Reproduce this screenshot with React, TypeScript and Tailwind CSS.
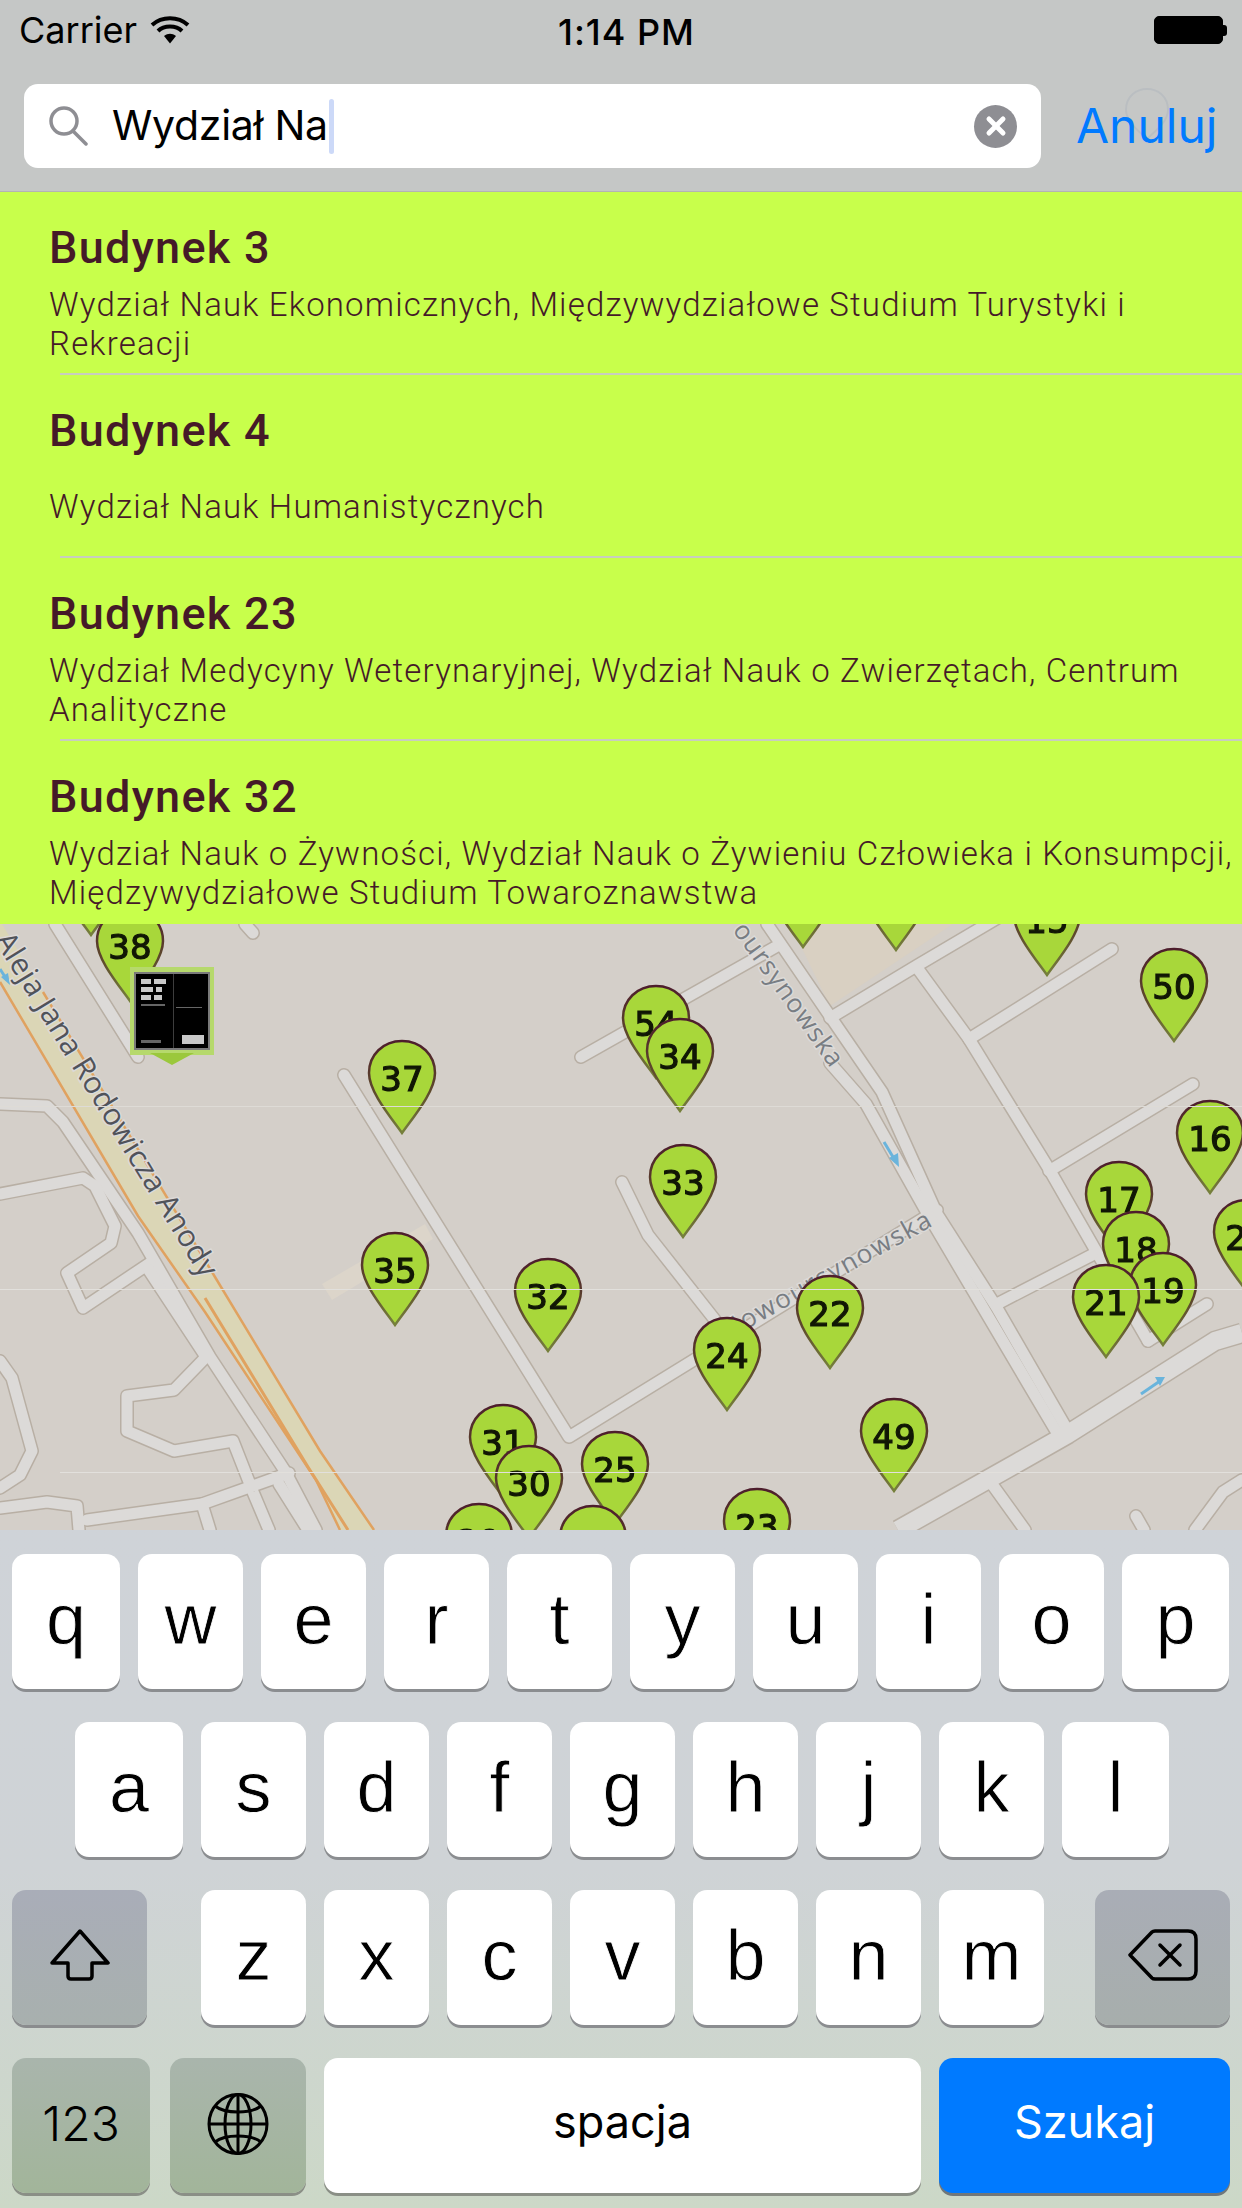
import React from "react";

const SF = "font-['Inter',_'Liberation_Sans',_sans-serif]";

const rows = [
  { title: "Budynek 3", desc: "Wydział Nauk Ekonomicznych, Międzywydziałowe Studium Turystyki i Rekreacji" },
  { title: "Budynek 4", desc: "Wydział Nauk Humanistycznych" },
  { title: "Budynek 23", desc: "Wydział Medycyny Weterynaryjnej, Wydział Nauk o Zwierzętach, Centrum Analityczne" },
  { title: "Budynek 32", desc: "Wydział Nauk o Żywności, Wydział Nauk o Żywieniu Człowieka i Konsumpcji, Międzywydziałowe Studium Towaroznawstwa" },
];

// x = pin centre, y = pin top, page coordinates
const pins: [string, number, number][] = [
  ["", 91, 841], ["", 803, 853], ["", 896, 856], ["15", 1047, 881],
  ["38", 130, 907], ["54", 656, 984], ["34", 680, 1017], ["50", 1174, 947],
  ["37", 402, 1039], ["33", 683, 1143], ["16", 1210, 1099], ["17", 1119, 1160],
  ["20", 1247, 1198], ["18", 1136, 1210], ["19", 1163, 1251], ["21", 1106, 1263],
  ["35", 395, 1231], ["32", 548, 1257], ["22", 830, 1274], ["24", 727, 1316],
  ["49", 894, 1397], ["31", 503, 1403], ["25", 615, 1430], ["30", 529, 1444],
  ["23", 757, 1487], ["29", 479, 1502], ["26", 593, 1504],
];

const roads: string[] = [
  "55,924 138,1057",
  "245,924 253,933",
  "0,1104 47,1106 63,1122 138,1233 210,1357 285,1471 316,1530",
  "0,1194 83,1178 95,1186 115,1226 111,1243 67,1273 83,1308 150,1263",
  "148,1269 206,1357 174,1390 127,1396 127,1431 174,1451 233,1441 253,1492 269,1530",
  "0,1508 47,1502 77,1506 79,1530",
  "87,1520 202,1504 289,1473",
  "202,1504 210,1530",
  "279,1484 308,1530",
  "0,1361 12,1378 32,1451 20,1475 0,1488",
  "344,1075 569,1437 937,1210",
  "581,1057 779,945",
  "767,924 834,1022 882,1092 937,1214 997,1308 1068,1431",
  "830,1063 866,1104 930,1218 1056,1431",
  "830,1018 918,965 1001,916",
  "918,969 969,1039 1049,1169 1096,1251 1148,1341",
  "969,1039 1112,949",
  "1049,1171 1193,1084",
  "997,1304 1092,1255",
  "1148,1341 1207,1304",
  "622,1182 648,1235 715,1320",
  "989,1480 1025,1530",
  "1136,1516 1144,1530",
  "1195,1530 1223,1492 1242,1480",
];

function MapDrawing() {
  return (
    <svg className="absolute inset-0 h-full w-full" viewBox="0 924 1242 606">
      <polygon points="790,924 830,1006 953,924" fill="#d9d0c2" />
      <polygon points="322,1284 425,1224 433,1239 332,1300" fill="#dcd5ca" />
      <polygon points="0,924 2,924 43,992 215,1277 320,1451 374,1530 340,1530 316,1480 205,1312 138,1216 0,982" fill="#dbd6b6" />
      <polyline points="43,992 215,1277 320,1451 374,1530" fill="none" stroke="#e0a260" strokeWidth="2.5" />
      <polyline points="0,982 138,1216 205,1312 316,1480 340,1530" fill="none" stroke="#e0a260" strokeWidth="2.5" />
      <polyline points="205,1298 308,1467 348,1530" fill="none" stroke="#e0a260" strokeWidth="3" />
      {roads.map((p) => (
        <polyline key={"c" + p} points={p} fill="none" stroke="#b8afa4" strokeWidth="14" strokeLinecap="round" strokeLinejoin="round" />
      ))}
      <polyline points="898,1530 1017,1463 1068,1434 1215,1341 1242,1333" fill="none" stroke="#b8afa4" strokeWidth="21" strokeLinejoin="round" />
      {roads.map((p) => (
        <polyline key={"f" + p} points={p} fill="none" stroke="#dcdad8" strokeWidth="11" strokeLinecap="round" strokeLinejoin="round" />
      ))}
      <polyline points="898,1530 1017,1463 1068,1434 1215,1341 1242,1333" fill="none" stroke="#dcdad8" strokeWidth="18" strokeLinejoin="round" />
      <g stroke="#6ab4dc" strokeWidth="3" fill="#6ab4dc">
        <line x1="884" y1="1142" x2="896" y2="1162" />
        <polygon points="899,1167 889,1158 898,1153" stroke="none" />
        <line x1="1141" y1="1394" x2="1160" y2="1381" />
        <polygon points="1165,1377 1155,1377 1160,1386" stroke="none" />
        <line x1="0" y1="969" x2="7" y2="980" />
        <polygon points="10,985 1,977 8,973" stroke="none" />
      </g>
      <g fontFamily="'Open Sans', sans-serif" style={{ paintOrder: "stroke" }} stroke="#dcdad8" strokeWidth="3">
        <text transform="translate(-6 940) rotate(58.5)" fontSize="30" fill="#50535a" textLength="398">Aleja Jana Rodowicza Anody</text>
        <text transform="translate(732 930) rotate(54.5)" fontSize="26" fill="#787d83" textLength="170">oursynowska</text>
        <text transform="translate(727 1340) rotate(-29)" fontSize="26" fill="#787d83" textLength="236">Nowoursynowska</text>
      </g>
    </svg>
  );
}

function Pin({ n, x, y }: { n: string; x: number; y: number }) {
  return (
    <div className="absolute h-[96px] w-[70px] blur-[0.6px]" style={{ left: x - 35, top: y - 924 }}>
      <svg className="absolute inset-0" width="70" height="96" viewBox="0 0 70 96">
        <defs>
          <linearGradient id="pinEdge" x1="0" y1="0" x2="0" y2="1">
            <stop offset="0" stopColor="#4d1d2c" />
            <stop offset="0.55" stopColor="#5e4a2c" />
            <stop offset="1" stopColor="#76803c" />
          </linearGradient>
        </defs>
        <path
          d="M35 2 C16 2 2 16 2 34 C2 52 22 76 35 94 C48 76 68 52 68 34 C68 16 54 2 35 2 Z"
          fill="#a8d73a"
          stroke="url(#pinEdge)"
          strokeWidth="2.5"
        />
      </svg>
      <div className="absolute left-0 right-0 top-[18px] text-center font-['DejaVu_Sans',_sans-serif] text-[34px] leading-[44px] text-[#111705] [-webkit-text-stroke:1.2px_#111705]">
        {n}
      </div>
    </div>
  );
}

function ImageMarker() {
  return (
    <div className="absolute left-[130px] top-[43px] h-[98px] w-[84px] blur-[0.7px]">
      <div className="absolute bottom-0 left-[20px] h-0 w-0 border-x-[22px] border-t-[12px] border-x-transparent border-t-[#9bc83c]" />
      <div className="h-[88px] w-[84px] bg-[#b6d96c] p-[4px] pt-[5px]">
        <div className="h-[78px] w-[76px] border-2 border-[#7a7a7a] bg-black">
          <svg width="72" height="74" viewBox="0 0 72 74" className="blur-[0.6px]">
            <g fill="#c9c9c9">
              <rect x="5" y="5" width="10" height="5" /><rect x="18" y="5" width="12" height="5" />
              <rect x="5" y="13" width="12" height="5" /><rect x="20" y="13" width="6" height="5" />
              <rect x="5" y="21" width="10" height="5" /><rect x="18" y="21" width="8" height="5" />
              <rect x="46" y="61" width="22" height="9" />
            </g>
            <g fill="#666">
              <rect x="5" y="30" width="24" height="2" /><rect x="40" y="33" width="26" height="1" />
              <rect x="37" y="0" width="1" height="74" opacity="0.6" /><rect x="5" y="66" width="20" height="3" />
            </g>
          </svg>
        </div>
      </div>
    </div>
  );
}

function Key({ label, className = "" }: { label: string; className?: string }) {
  return (
    <div className={`flex h-[135px] items-center justify-center rounded-[14px] bg-white pb-[6px] font-['Liberation_Sans',_sans-serif] text-[72px] font-normal leading-none text-black shadow-[0_3px_0_#8b8d90] [-webkit-text-stroke:0.8px_#fff] ${className}`}>
      {label}
    </div>
  );
}

function Wifi() {
  return (
    <svg width="40" height="28" viewBox="0 0 40 28" fill="none" stroke="#000" strokeWidth="4">
      <path d="M2 9 C12 0 28 0 38 9" />
      <path d="M8 15 C14 9 26 9 32 15" />
      <path d="M14 20 L20 27.5 L26 20 C22 17 18 17 14 20 Z" fill="#000" stroke="none" />
    </svg>
  );
}

function Battery() {
  return (
    <div className="flex items-center">
      <div className="h-[28px] w-[69px] rounded-[5px] border border-black bg-black" />
      <div className="h-[11px] w-[4px] rounded-r-[3px] bg-black" />
    </div>
  );
}

export default function App() {
  return (
    <div className={`flex h-[2208px] w-[1242px] flex-col overflow-hidden bg-white ${SF}`}>
      {/* Navigation header */}
      <header className="relative z-10 h-[192px] shrink-0 border-b border-[#b3b3b3] bg-[#c5c7c6]">
        <div className="relative flex h-[60px] items-center justify-between pl-[19px] pr-[15px]">
          <div className="flex items-center gap-[13px] text-[36px] leading-none text-black">
            <span>Carrier</span>
            <Wifi />
          </div>
          <div className="absolute left-[11px] right-0 top-[12px] text-center text-[36px] font-medium leading-[40px] tracking-[1px] text-black">1:14 PM</div>
          <Battery />
        </div>
        <div className="mt-[24px] flex items-center pl-[24px]">
          <div className="flex h-[84px] w-[1017px] items-center rounded-[14px] bg-white pl-[24px] pr-[24px]">
            <svg width="42" height="40" viewBox="0 0 42 40" fill="none" stroke="#8e8e93" strokeWidth="3.5">
              <circle cx="16" cy="15" r="13" />
              <line x1="25" y1="25" x2="38" y2="38" strokeLinecap="round" />
            </svg>
            <span className="ml-[22px] -translate-y-[1px] text-[41px] leading-none tracking-[-0.3px] text-black">Wydział Na</span>
            <span className="ml-[1px] h-[55px] w-[5px] rounded-sm bg-[#ccd9f8]" />
            <div className="ml-auto flex h-[43px] w-[43px] items-center justify-center rounded-full bg-[#8e8e93]">
              <svg width="22" height="22" viewBox="0 0 22 22" stroke="#fff" strokeWidth="5" strokeLinecap="round">
                <line x1="4" y1="4" x2="18" y2="18" />
                <line x1="18" y1="4" x2="4" y2="18" />
              </svg>
            </div>
          </div>
          <div className="relative ml-[35px] text-[48px] leading-none text-[#007aff]">
            <svg className="absolute left-[46px] top-[-16px]" width="50" height="54" viewBox="0 0 50 54" fill="none" stroke="#b6bbc0" strokeWidth="2" opacity="0.7">
              <path d="M4 24 C4 -4 46 -4 46 24 C46 36 32 46 25 53 C18 46 4 36 4 24 Z" />
            </svg>
            <span className="relative">Anuluj</span>
          </div>
        </div>
      </header>

      {/* Search results */}
      <ul className="relative z-10 h-[732px] shrink-0 overflow-hidden bg-[#c8ff4b] font-['Roboto',_sans-serif] text-[#451a28]">
        {rows.map((r, i) => (
          <li key={r.title} className="flex h-[183px] flex-col pl-[49px]">
            <div className="mt-[33px] h-[46px] text-[45px] font-medium leading-[46px] tracking-[1.3px]">{r.title}</div>
            <div className="mt-[13px] flex h-[80px] items-center text-[33px] font-light leading-[39.5px] tracking-[1.17px]">
              <p>{r.desc}</p>
            </div>
            {i < 3 && <div className="ml-[11px] mt-auto h-[2px] bg-[#c8cdbf]" />}
          </li>
        ))}
      </ul>

      {/* Map */}
      <div className="relative h-[606px] shrink-0 overflow-hidden bg-[#d4cfc9]">
        <MapDrawing />
        {pins.slice(0, 5).map(([n, x, y]) => <Pin key={x + "-" + y} n={n} x={x} y={y} />)}
        <ImageMarker />
        {pins.slice(5).map(([n, x, y]) => <Pin key={x + "-" + y} n={n} x={x} y={y} />)}
        <div className="absolute left-0 right-0 top-[182px] h-px bg-[#dedbd6]" />
        <div className="absolute left-0 right-0 top-[365px] h-px bg-[#e2e0dc]" />
        <div className="absolute left-[60px] right-0 top-[548px] h-px bg-[#e2e0dc]" />
      </div>

      {/* Keyboard */}
      <div className="flex h-[678px] flex-col gap-[33px] bg-gradient-to-b from-[#cfd3d8] via-[#cfd3d6] to-[#ccd8c7] pt-[24px]">
        <div className="flex gap-[18px] pl-[12px]">
          {"qwertyuiop".split("").map((c) => (
            <Key key={c} label={c} className={c === "q" ? "w-[108px]" : c === "p" ? "w-[107px]" : "w-[105px]"} />
          ))}
        </div>
        <div className="flex gap-[18px] pl-[75px]">
          {"asdfghjkl".split("").map((c) => (
            <Key key={c} label={c} className={c === "a" ? "w-[108px]" : c === "l" ? "w-[107px]" : "w-[105px]"} />
          ))}
        </div>
        <div className="flex pl-[12px]">
          <div className="flex h-[135px] w-[135px] items-center justify-center rounded-[14px] bg-gradient-to-b from-[#a9adb8] to-[#a8b0ae] pb-[6px] shadow-[0_3px_0_#8a8c8e]">
            <svg width="60" height="52" viewBox="0 0 60 52" fill="none" stroke="#000" strokeWidth="3.5" strokeLinejoin="round">
              <path d="M30 2 L58 34 L42 34 L42 47 Q42 50 39 50 L21 50 Q18 50 18 47 L18 34 L2 34 Z" />
            </svg>
          </div>
          <div className="ml-[54px] flex gap-[18px]">
            {"zxcvbnm".split("").map((c) => (
              <Key key={c} label={c} className="w-[105px]" />
            ))}
          </div>
          <div className="ml-[51px] flex h-[135px] w-[135px] items-center justify-center rounded-[14px] bg-gradient-to-b from-[#a9adb6] to-[#a7aeac] pb-[6px] shadow-[0_3px_0_#8a8c8e]">
            <svg width="70" height="52" viewBox="0 0 70 52" fill="none" stroke="#000" strokeWidth="3.5" strokeLinejoin="round" strokeLinecap="round">
              <path d="M2 26 L24 3 Q25 2 27 2 L60 2 Q68 2 68 10 L68 42 Q68 50 60 50 L27 50 Q25 50 24 49 Z" />
              <line x1="32" y1="16" x2="52" y2="36" />
              <line x1="52" y1="16" x2="32" y2="36" />
            </svg>
          </div>
        </div>
        <div className="flex pl-[12px]">
          <div className="flex h-[135px] w-[138px] items-center justify-center rounded-[14px] bg-gradient-to-b from-[#a9b5ac] to-[#a2b59a] pb-[4px] text-[48px] font-light leading-none text-black shadow-[0_3px_0_#8a8f86]">
            123
          </div>
          <div className="ml-[20px] flex h-[135px] w-[136px] items-center justify-center rounded-[14px] bg-gradient-to-b from-[#a9b5ac] to-[#a2b59a] pb-[4px] shadow-[0_3px_0_#8a8f86]">
            <svg width="62" height="62" viewBox="0 0 62 62" fill="none" stroke="#000" strokeWidth="3">
              <ellipse cx="31" cy="31" rx="29" ry="29.5" />
              <ellipse cx="31" cy="31" rx="13" ry="29.5" />
              <line x1="31" y1="1" x2="31" y2="61" />
              <line x1="2" y1="31" x2="60" y2="31" />
              <path d="M8 13 C18 21 44 21 54 13" />
              <path d="M8 49 C18 41 44 41 54 49" />
            </svg>
          </div>
          <div className="ml-[18px] flex h-[135px] w-[597px] items-center justify-center rounded-[14px] bg-white pb-[8px] text-[45px] leading-none text-black shadow-[0_3px_0_#8a8f86]">
            spacja
          </div>
          <div className="ml-[18px] flex h-[135px] w-[291px] items-center justify-center rounded-[14px] bg-[#007aff] pb-[8px] text-[45px] leading-none text-white shadow-[0_3px_0_#70777a]">
            Szukaj
          </div>
        </div>
      </div>
    </div>
  );
}
